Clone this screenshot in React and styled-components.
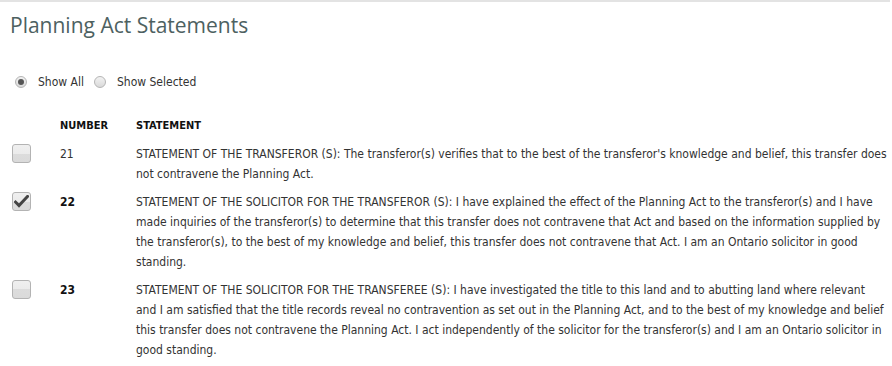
import React, { useState } from "react";
import styled, { createGlobalStyle } from "styled-components";

const Global = createGlobalStyle`
  html, body { margin: 0; padding: 0; background: #fff; }
  body { font-family: "DejaVu Sans Condensed", "DejaVu Sans", sans-serif; font-stretch: condensed; color: #333; }
`;

const Page = styled.div`
  width: 890px;
  border-top: 2px solid #e3e3e3;
  padding: 9px 0 0 10px;
  box-sizing: border-box;
`;

const Title = styled.h1`
  margin: 0;
  font-family: "Open Sans", sans-serif;
  font-stretch: normal;
  font-weight: 400;
  font-size: 21px;
  line-height: 28px;
  color: #4d6161;
`;

const Filter = styled.div`
  display: flex;
  align-items: center;
  margin-top: 36px;
  padding-left: 5px;
  font-size: 12px;
  line-height: 14px;
`;

const RadioLabel = styled.label`
  display: flex;
  align-items: center;
  margin-right: 10px;
  color: #333;
`;

const RadioDot = styled.span`
  width: 12px;
  height: 12px;
  box-sizing: border-box;
  border-radius: 50%;
  border: 1px solid #b5b5b5;
  background: linear-gradient(#f2f2f2, #d9d9d9);
  margin-right: 11px;
  display: flex;
  align-items: center;
  justify-content: center;
  &::after {
    content: "";
    width: 6px;
    height: 6px;
    border-radius: 50%;
    background: ${(p) => (p.$on ? "#555" : "transparent")};
  }
`;

const Table = styled.div`
  margin-top: 30px;
  display: grid;
  grid-template-columns: 50px 76px 1fr;
`;

const Head = styled.div`
  font-weight: 700;
  font-size: 11px;
  line-height: 14px;
  color: #111;
  padding-bottom: 11px;
`;

const Cell = styled.div`
  font-size: 12px;
  line-height: 20px;
  padding-bottom: 8px;
  color: #333;
`;

const NumCell = styled(Cell)`
  font-weight: ${(p) => (p.$bold ? 700 : 400)};
  color: ${(p) => (p.$bold ? "#111" : "#333")};
`;

const Line = styled.span`
  display: block;
  white-space: nowrap;
`;

const BoxCell = styled.div`
  padding-left: 2px;
`;

const Box = styled.button`
  width: 19px;
  height: 19px;
  padding: 0;
  box-sizing: border-box;
  border: 1px solid #b3b3b3;
  border-radius: 3px;
  background: linear-gradient(#efefef 0%, #ebebeb 50%, #dcdcdc 50%, #dadada 100%);
  display: flex;
  align-items: center;
  justify-content: center;
  cursor: pointer;
`;

const rows = [
  {
    num: "21",
    bold: false,
    checked: false,
    lines: [
      "STATEMENT OF THE TRANSFEROR (S): The transferor(s) verifies that to the best of the transferor's knowledge and belief, this transfer does",
      "not contravene the Planning Act.",
    ],
  },
  {
    num: "22",
    bold: true,
    checked: true,
    lines: [
      "STATEMENT OF THE SOLICITOR FOR THE TRANSFEROR (S): I have explained the effect of the Planning Act to the transferor(s) and I have",
      "made inquiries of the transferor(s) to determine that this transfer does not contravene that Act and based on the information supplied by",
      "the transferor(s), to the best of my knowledge and belief, this transfer does not contravene that Act. I am an Ontario solicitor in good",
      "standing.",
    ],
  },
  {
    num: "23",
    bold: true,
    checked: false,
    lines: [
      "STATEMENT OF THE SOLICITOR FOR THE TRANSFEREE (S): I have investigated the title to this land and to abutting land where relevant",
      "and I am satisfied that the title records reveal no contravention as set out in the Planning Act, and to the best of my knowledge and belief",
      "this transfer does not contravene the Planning Act. I act independently of the solicitor for the transferor(s) and I am an Ontario solicitor in",
      "good standing.",
    ],
  },
];

const Check = () => (
  <svg width="15" height="13" viewBox="0 0 15 13">
    <path d="M1.5 7 L5 10.5 L13.5 1.5" fill="none" stroke="#444" strokeWidth="3" strokeLinecap="square" />
  </svg>
);

export default function App() {
  const [mode, setMode] = useState("all");
  const [checked, setChecked] = useState(rows.map((r) => r.checked));
  return (
    <Page>
      <Global />
      <Title>Planning Act Statements</Title>
      <Filter>
        <RadioLabel onClick={() => setMode("all")}>
          <RadioDot $on={mode === "all"} />
          Show All
        </RadioLabel>
        <RadioLabel onClick={() => setMode("sel")}>
          <RadioDot $on={mode === "sel"} />
          Show Selected
        </RadioLabel>
      </Filter>
      <Table>
        <Head />
        <Head>NUMBER</Head>
        <Head>STATEMENT</Head>
        {rows.map((r, i) => (
          <React.Fragment key={r.num}>
            <BoxCell>
              <Box
                onClick={() =>
                  setChecked((c) => c.map((v, j) => (j === i ? !v : v)))
                }
              >
                {checked[i] && <Check />}
              </Box>
            </BoxCell>
            <NumCell $bold={r.bold}>{r.num}</NumCell>
            <Cell>
              {r.lines.map((l, k) => (
                <Line key={k}>{l}</Line>
              ))}
            </Cell>
          </React.Fragment>
        ))}
      </Table>
    </Page>
  );
}
